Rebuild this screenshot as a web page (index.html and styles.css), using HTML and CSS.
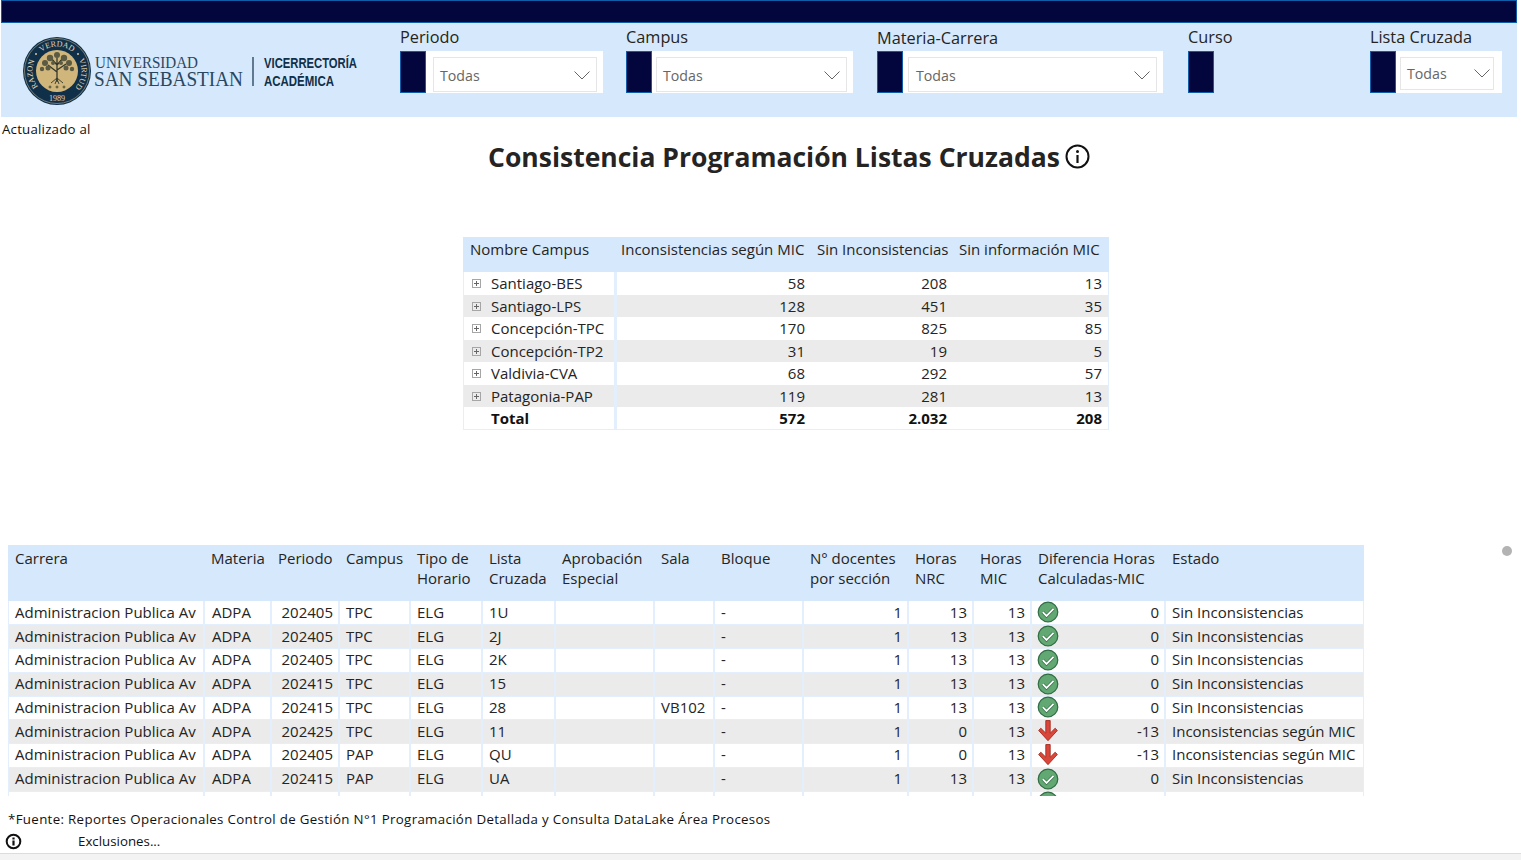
FILE: index.html
```html
<!DOCTYPE html>
<html lang="en">
<head>
    <meta charset="UTF-8">
    <title>Consistencia Programación Listas Cruzadas</title>
    <link rel="stylesheet" href="styles.css">
</head>
<body>
    <svg class="defs" width="0" height="0">
        <symbol id="plus" viewBox="0 0 9 9">
            <rect x="0.5" y="0.5" width="8" height="8" fill="none" stroke="#a6a6a6"/>
            <path d="M2 4.5h5M4.5 2v5" stroke="#666" fill="none"/>
        </symbol>
        <symbol id="ok" viewBox="0 0 22 22">
            <circle cx="11" cy="11" r="9.800" fill="#62a873" stroke="#2f6b43" stroke-width="1.200"/>
            <path d="M5.800 11.200l3.700 3.800 7-7.200" fill="none" stroke="#2f6b43" stroke-width="3.200"/>
            <path d="M5.800 11.200l3.700 3.800 7-7.200" fill="none" stroke="#fff" stroke-width="1.800"/>
        </symbol>
        <symbol id="down" viewBox="0 0 18 20">
            <path d="M7 .5h4v11.500l4.500-4.500 2 2L9 18.800.5 9.500l2-2L7 12z" fill="#d9463a" stroke="#a3291f" stroke-width=".8"/>
        </symbol>
    </svg>

    <div class="topbar"></div>

    <header class="filters">
        <div class="logo">
            <svg width="378" height="70" viewBox="0 0 378 70">
                <defs>
                    <path id="ring" d="M17.700 52.300A24.500 24.500 0 1 1 52.300 52.300"/>
                </defs>
                <circle cx="35" cy="35" r="34" fill="#10304a"/>
                <circle cx="35" cy="35" r="32.500" fill="none" stroke="#d9c79b" stroke-width=".5"/>
                <circle cx="35" cy="35" r="21" fill="#d1b67c"/>
                <text class="ring"><textPath href="#ring" startOffset="14%" text-anchor="middle">RAZON</textPath></text>
                <text class="ring"><textPath href="#ring" startOffset="50%" text-anchor="middle">VERDAD</textPath></text>
                <text class="ring"><textPath href="#ring" startOffset="86%" text-anchor="middle">VIRTUD</textPath></text>
                <text class="ring" x="35" y="65" text-anchor="middle">1989</text>
                <circle cx="14" cy="18" r="1" fill="#d9c79b"/><circle cx="56" cy="18" r="1" fill="#d9c79b"/>
                <g fill="none" stroke="#33382c">
                    <path d="M35 46V22M35 36l-9-7M35 34l9-6M35 29l-6-7M35 29l6-7" stroke-width="1.300"/>
                    <path d="M35 42l-6 5M35 42l6 5M35 43l-2 5M35 43l2 5" stroke-width=".9"/>
                    <path d="M26.500 51h3M28 49.500v3M33.500 51h3M35 49.500v3M40.500 51h3M42 49.500v3" stroke-width=".8"/>
                </g>
                <g fill="#5b5a42">
                    <circle cx="23" cy="27" r="3"/><circle cx="47" cy="27" r="3"/>
                    <circle cx="28" cy="22" r="3.200"/><circle cx="42" cy="22" r="3.200"/>
                    <circle cx="35" cy="19" r="3"/><circle cx="20" cy="33" r="2.200"/><circle cx="50" cy="33" r="2.200"/>
                    <circle cx="26" cy="32" r="2.500"/><circle cx="44" cy="32" r="2.500"/>
                    <circle cx="31" cy="27" r="2"/><circle cx="39" cy="27" r="2"/>
                </g>
                <text class="uni" x="73" y="32" textLength="103" lengthAdjust="spacingAndGlyphs">UNIVERSIDAD</text>
                <text class="uni uni-big" x="72" y="49.500" textLength="149" lengthAdjust="spacingAndGlyphs">SAN SEBASTIAN</text>
                <path d="M231 21v29" stroke="#10304a" stroke-width="1.200"/>
                <text class="vice" x="242" y="32" textLength="93" lengthAdjust="spacingAndGlyphs">VICERRECTORÍA</text>
                <text class="vice" x="242" y="50" textLength="70" lengthAdjust="spacingAndGlyphs">ACADÉMICA</text>
            </svg>
        </div>

        <div class="filter f-periodo">
            <div class="filter-label">Periodo</div>
            <div class="filter-row">
                <div class="eraser"></div>
                <div class="slicer"><div class="dropdown"><span>Todas</span><svg width="16" height="9" viewBox="0 0 16 9"><path d="M.5.5l7.500 7.500L15.500.5" fill="none" stroke="#666"/></svg></div></div>
            </div>
        </div>
        <div class="filter f-campus">
            <div class="filter-label">Campus</div>
            <div class="filter-row">
                <div class="eraser"></div>
                <div class="slicer"><div class="dropdown"><span>Todas</span><svg width="16" height="9" viewBox="0 0 16 9"><path d="M.5.5l7.500 7.500L15.500.5" fill="none" stroke="#666"/></svg></div></div>
            </div>
        </div>
        <div class="filter f-materia">
            <div class="filter-label">Materia-Carrera</div>
            <div class="filter-row">
                <div class="eraser"></div>
                <div class="slicer"><div class="dropdown"><span>Todas</span><svg width="16" height="9" viewBox="0 0 16 9"><path d="M.5.5l7.500 7.500L15.500.5" fill="none" stroke="#666"/></svg></div></div>
            </div>
        </div>
        <div class="filter f-curso">
            <div class="filter-label">Curso</div>
            <div class="filter-row">
                <div class="eraser"></div>
            </div>
        </div>
        <div class="filter f-lista">
            <div class="filter-label">Lista Cruzada</div>
            <div class="filter-row">
                <div class="eraser"></div>
                <div class="slicer"><div class="dropdown"><span>Todas</span><svg width="16" height="9" viewBox="0 0 16 9"><path d="M.5.5l7.500 7.500L15.500.5" fill="none" stroke="#666"/></svg></div></div>
            </div>
        </div>
    </header>

    <div class="updated">Actualizado al</div>

    <h1 class="title">Consistencia Programación Listas Cruzadas
        <svg width="25" height="25" viewBox="0 0 25 25"><circle cx="12.500" cy="12.500" r="11" fill="none" stroke="#111" stroke-width="2"/><circle cx="12.500" cy="7.500" r="1.500" fill="#111"/><path d="M12.500 11v8" stroke="#111" stroke-width="2.200"/></svg>
    </h1>

    <div class="matrix-wrap">
        <table class="matrix">
            <colgroup><col class="m1"><col class="m2"><col class="m3"><col class="m4"></colgroup>
            <thead>
                <tr><th>Nombre Campus</th><th>Inconsistencias según MIC</th><th>Sin Inconsistencias</th><th>Sin información MIC</th></tr>
            </thead>
            <tbody>
                <tr><td><svg class="plus"><use href="#plus"/></svg>Santiago-BES</td><td>58</td><td>208</td><td>13</td></tr>
                <tr class="alt"><td><svg class="plus"><use href="#plus"/></svg>Santiago-LPS</td><td>128</td><td>451</td><td>35</td></tr>
                <tr><td><svg class="plus"><use href="#plus"/></svg>Concepción-TPC</td><td>170</td><td>825</td><td>85</td></tr>
                <tr class="alt"><td><svg class="plus"><use href="#plus"/></svg>Concepción-TP2</td><td>31</td><td>19</td><td>5</td></tr>
                <tr><td><svg class="plus"><use href="#plus"/></svg>Valdivia-CVA</td><td>68</td><td>292</td><td>57</td></tr>
                <tr class="alt"><td><svg class="plus"><use href="#plus"/></svg>Patagonia-PAP</td><td>119</td><td>281</td><td>13</td></tr>
                <tr class="total"><td>Total</td><td>572</td><td>2.032</td><td>208</td></tr>
            </tbody>
        </table>
    </div>

    <div class="detail-wrap">
        <div class="detail-clip">
            <table class="detail">
                <colgroup>
                    <col class="d1"><col class="d2"><col class="d3"><col class="d4"><col class="d5"><col class="d6"><col class="d7">
                    <col class="d8"><col class="d9"><col class="d10"><col class="d11"><col class="d12"><col class="d13"><col class="d14"><col class="d15">
                </colgroup>
                <thead>
                    <tr>
                        <th>Carrera</th><th>Materia</th><th>Periodo</th><th>Campus</th><th>Tipo de Horario</th><th>Lista Cruzada</th><th>Aprobación Especial</th>
                        <th>Sala</th><th>Bloque</th><th>N° docentes por sección</th><th>Horas NRC</th><th>Horas MIC</th><th colspan="2">Diferencia Horas Calculadas-MIC</th><th>Estado</th>
                    </tr>
                </thead>
                <tbody>
                    <tr><td>Administracion Publica Av</td><td>ADPA</td><td class="num">202405</td><td>TPC</td><td>ELG</td><td>1U</td><td></td><td></td><td>-</td><td class="num">1</td><td class="num">13</td><td class="num">13</td><td class="ico"><svg><use href="#ok"/></svg></td><td class="num">0</td><td>Sin Inconsistencias</td></tr>
                    <tr class="alt"><td>Administracion Publica Av</td><td>ADPA</td><td class="num">202405</td><td>TPC</td><td>ELG</td><td>2J</td><td></td><td></td><td>-</td><td class="num">1</td><td class="num">13</td><td class="num">13</td><td class="ico"><svg><use href="#ok"/></svg></td><td class="num">0</td><td>Sin Inconsistencias</td></tr>
                    <tr><td>Administracion Publica Av</td><td>ADPA</td><td class="num">202405</td><td>TPC</td><td>ELG</td><td>2K</td><td></td><td></td><td>-</td><td class="num">1</td><td class="num">13</td><td class="num">13</td><td class="ico"><svg><use href="#ok"/></svg></td><td class="num">0</td><td>Sin Inconsistencias</td></tr>
                    <tr class="alt"><td>Administracion Publica Av</td><td>ADPA</td><td class="num">202415</td><td>TPC</td><td>ELG</td><td>15</td><td></td><td></td><td>-</td><td class="num">1</td><td class="num">13</td><td class="num">13</td><td class="ico"><svg><use href="#ok"/></svg></td><td class="num">0</td><td>Sin Inconsistencias</td></tr>
                    <tr><td>Administracion Publica Av</td><td>ADPA</td><td class="num">202415</td><td>TPC</td><td>ELG</td><td>28</td><td></td><td>VB102</td><td>-</td><td class="num">1</td><td class="num">13</td><td class="num">13</td><td class="ico"><svg><use href="#ok"/></svg></td><td class="num">0</td><td>Sin Inconsistencias</td></tr>
                    <tr class="alt"><td>Administracion Publica Av</td><td>ADPA</td><td class="num">202425</td><td>TPC</td><td>ELG</td><td>11</td><td></td><td></td><td>-</td><td class="num">1</td><td class="num">0</td><td class="num">13</td><td class="ico"><svg><use href="#down"/></svg></td><td class="num">-13</td><td>Inconsistencias según MIC</td></tr>
                    <tr><td>Administracion Publica Av</td><td>ADPA</td><td class="num">202405</td><td>PAP</td><td>ELG</td><td>QU</td><td></td><td></td><td>-</td><td class="num">1</td><td class="num">0</td><td class="num">13</td><td class="ico"><svg><use href="#down"/></svg></td><td class="num">-13</td><td>Inconsistencias según MIC</td></tr>
                    <tr class="alt"><td>Administracion Publica Av</td><td>ADPA</td><td class="num">202415</td><td>PAP</td><td>ELG</td><td>UA</td><td></td><td></td><td>-</td><td class="num">1</td><td class="num">13</td><td class="num">13</td><td class="ico"><svg><use href="#ok"/></svg></td><td class="num">0</td><td>Sin Inconsistencias</td></tr>
                    <tr><td></td><td></td><td></td><td></td><td></td><td></td><td></td><td></td><td></td><td></td><td></td><td></td><td class="ico"><svg><use href="#ok"/></svg></td><td></td><td></td></tr>
                </tbody>
            </table>
        </div>
        <div class="scroll-dot"></div>
    </div>

    <footer class="notes">
        <div class="source">*Fuente: Reportes Operacionales Control de Gestión N°1 Programación Detallada y Consulta DataLake Área Procesos</div>
        <div class="exclusions">
            <svg width="17" height="17" viewBox="0 0 17 17"><circle cx="8.500" cy="8.500" r="6.800" fill="none" stroke="#111" stroke-width="2"/><path d="M8.500 4.500v2M8.500 7.500v5" stroke="#111" stroke-width="2.200"/></svg>
            <span>Exclusiones...</span>
        </div>
    </footer>
    <div class="bottom-strip"></div>
</body>
</html>
```
FILE: styles.css
```css
html, body {
    margin: 0;
    padding: 0;
}
body {
    width: 1521px;
    height: 860px;
    overflow: hidden;
    background-color: #fff;
    color: #252423;
    font-family: "Open Sans", "Noto Sans", sans-serif;
    font-size: 15px;
}
.defs {
    position: absolute;
}
.topbar {
    width: 1514px;
    height: 21px;
    margin-left: 1px;
    background-color: #03063d;
    border: 1px solid #0f5ca8;
}
.filters {
    display: flex;
    width: 1516px;
    height: 94px;
    margin-left: 1px;
    background-color: #d6e8fb;
}
.logo {
    width: 399px;
    padding: 13px 0 0 21px;
    box-sizing: border-box;
}
.filter {
    padding-top: 4px;
}
.f-periodo { width: 226px; }
.f-campus { width: 251px; }
.f-materia { width: 311px; }
.f-curso { width: 182px; }
.f-lista { width: 147px; }
.filter-label {
    height: 24px;
    font-size: 16.300px;
    line-height: 20px;
    white-space: nowrap;
}
.f-materia .filter-label {
    line-height: 22px;
}
.filter-row {
    display: flex;
    height: 42px;
}
.eraser {
    width: 24px;
    height: 40px;
    background-color: #03063d;
    border: 1px solid #0f5ca8;
}
.slicer {
    padding: 6px;
    box-sizing: border-box;
    background-color: #fff;
}
.f-periodo .slicer { width: 177px; padding-left: 7px; }
.f-campus .slicer { width: 201px; padding-left: 4px; }
.f-materia .slicer { width: 260px; padding-left: 5px; }
.f-lista .slicer { width: 106px; padding-left: 4px; padding-right: 8px; }
.dropdown {
    display: flex;
    align-items: center;
    justify-content: space-between;
    height: 32px;
    padding: 1px 6px 0 6px;
    border: 1px solid #e6e6e6;
    color: #666;
    font-size: 14.200px;
}
.f-materia .dropdown {
    padding-left: 7px;
}
.f-lista .dropdown {
    height: 31px;
    padding: 0 3px 0 6px;
}
.updated {
    padding: 5px 0 0 2px;
    height: 19px;
    font-size: 13.300px;
    letter-spacing: .2px;
    line-height: 15px;
    color: #111;
}
.title {
    display: flex;
    align-items: center;
    gap: 5px;
    height: 28px;
    margin: 0 0 0 488px;
    padding-top: 2px;
    font-size: 26.500px;
    font-weight: 700;
    white-space: nowrap;
    color: #252423;
}
.title svg {
    margin-bottom: 2px;
}
.matrix-wrap {
    width: 646px;
    margin: 66px 0 0 463px;
}
.matrix, .detail {
    border-collapse: collapse;
    table-layout: fixed;
    width: 100%;
    font-size: 15px;
}
.m1 { width: 152px; }
.m2 { width: 195px; }
.m3 { width: 142px; }
.m4 { width: 157px; }
.matrix th, .detail th {
    background-color: #d6e8fb;
    font-weight: 400;
    text-align: left;
    vertical-align: top;
}
.matrix th {
    height: 35px;
    padding: 2px 6px 0 7px;
    box-sizing: border-box;
    white-space: nowrap;
}
.matrix th:nth-child(2) {
    padding-left: 6px;
}
.matrix td {
    height: 22.500px;
    padding: 0 5px 0 0;
    box-sizing: border-box;
    text-align: right;
    line-height: 20px;
    white-space: nowrap;
}
.matrix td:last-child {
    padding-right: 7px;
    box-shadow: inset -1px 0 0 #e3effc;
}
.matrix td:first-child {
    text-align: left;
    padding-left: 28px;
    border-right: 3px solid #e3effc;
    box-shadow: inset 1px 0 0 #e3effc;
}
.matrix tbody tr:last-child td {
    border-bottom: 1px solid #e3effc;
}
.plus {
    position: absolute;
    width: 9px;
    height: 9px;
    margin: 6px 0 0 -19px;
}
.alt td {
    background-color: #ebebeb;
}
.total td {
    font-weight: 700;
    color: #111;
}
.detail-wrap {
    position: relative;
    width: 1356px;
    margin: 115px 0 0 8px;
}
.detail-clip {
    height: 251px;
    overflow: hidden;
}
.d1 { width: 196px; }
.d2 { width: 67px; }
.d3 { width: 68px; }
.d4 { width: 71px; }
.d5 { width: 72px; }
.d6 { width: 73px; }
.d7 { width: 99px; }
.d8 { width: 60px; }
.d9 { width: 89px; }
.d10 { width: 105px; }
.d11 { width: 65px; }
.d12 { width: 58px; }
.d13 { width: 34px; }
.d14 { width: 100px; }
.d15 { width: 199px; }
.detail th {
    height: 56px;
    padding: 3px 7px 0;
    box-sizing: border-box;
    line-height: 20px;
}
.detail td {
    height: 23.750px;
    padding: 0 5px 2px 7px;
    box-sizing: border-box;
    border-right: 2px solid #e3effc;
    border-bottom: 1px solid #e3effc;
    line-height: 20px;
    white-space: nowrap;
}
.detail td:nth-child(n+3) {
    padding-left: 6px;
}
.detail td:first-child {
    box-shadow: inset 1px 0 0 #e3effc;
}
.detail td:last-child {
    border-right: 0;
    box-shadow: inset -1px 0 0 #e3effc;
}
.detail td.num {
    text-align: right;
}
.detail td.ico {
    padding: 0 0 1px;
    border-right: 0;
}
.ico svg {
    display: block;
    width: 22px;
    height: 22px;
    margin: -1px 0 -1px 5px;
}
.scroll-dot {
    position: absolute;
    top: 1px;
    left: 1494px;
    width: 10px;
    height: 10px;
    border-radius: 50%;
    background-color: #b3b3b3;
}
.notes {
    height: 57px;
    padding: 15px 0 0 8px;
    box-sizing: border-box;
    font-size: 13.300px;
    color: #111;
}
.source {
    height: 21px;
    line-height: 16px;
    letter-spacing: .33px;
    white-space: nowrap;
}
.exclusions {
    display: flex;
    align-items: center;
    margin-left: -3px;
}
.exclusions span {
    margin-left: 56px;
}
.bottom-strip {
    height: 7px;
    background-color: #f3f3f3;
    border-top: 1px solid #dcdcdc;
}
.ring {
    fill: #e3d7b5;
    font-family: "Liberation Serif", serif;
    font-size: 8px;
}
.uni {
    fill: #2a475f;
    font-family: "Liberation Serif", serif;
    font-size: 17px;
}
.uni-big {
    font-size: 22px;
}
.vice {
    fill: #10304a;
    font-family: "Liberation Sans", sans-serif;
    font-size: 15.500px;
    font-weight: 700;
}
```
